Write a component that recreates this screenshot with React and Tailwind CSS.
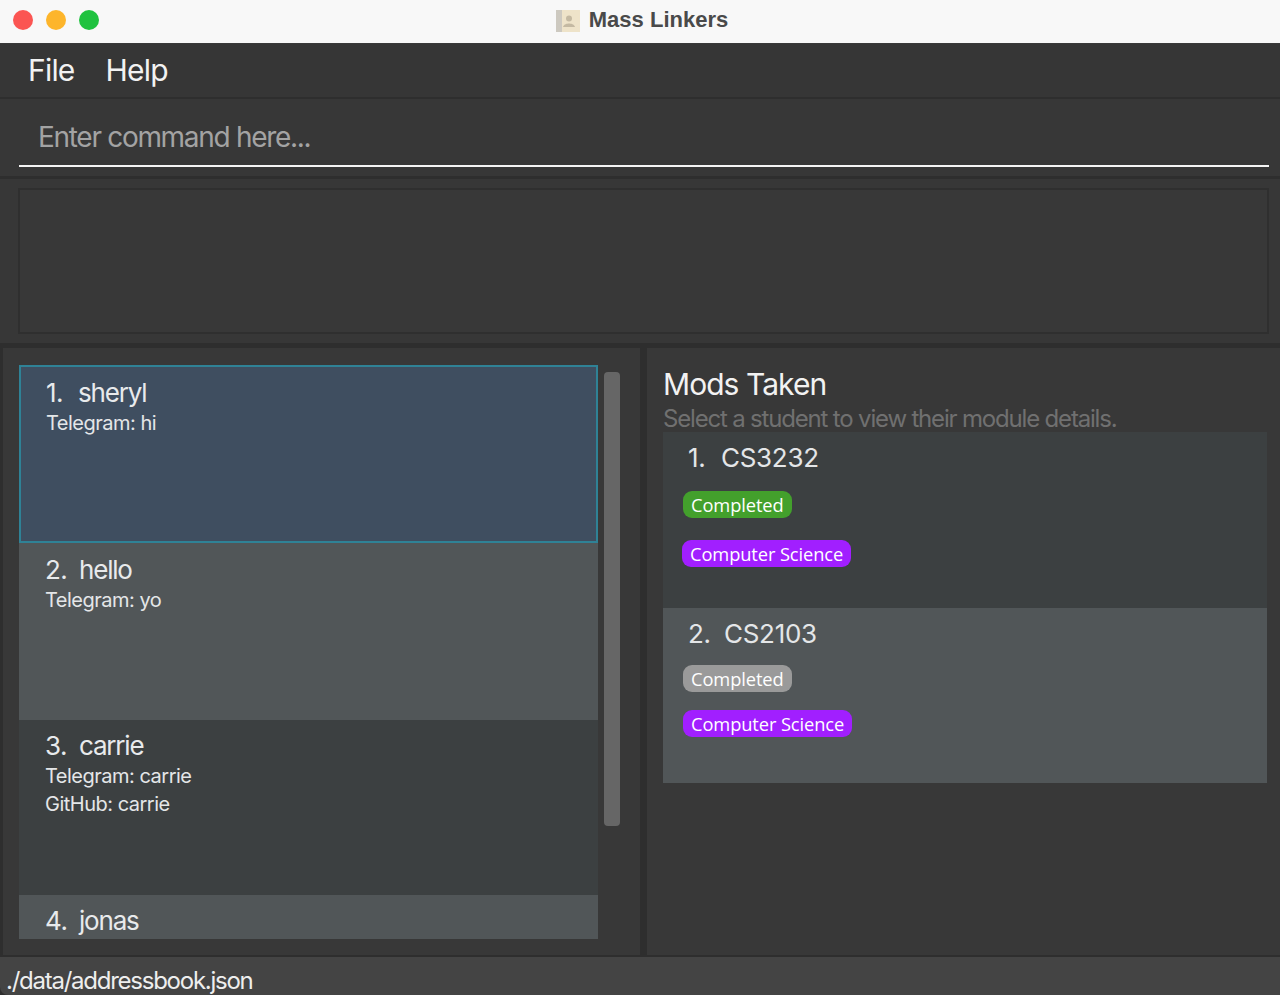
const sans = "font-['Inter','Liberation_Sans',sans-serif]";

function Badge({ color, children }) {
  return (
    <span className={`inline-flex h-[27px] items-center rounded-[9px] px-2 pt-px text-[18.3px] leading-none text-white font-['Open_Sans','Noto_Sans',sans-serif] tracking-[-0.1px] ${color}`}>
      {children}
    </span>
  );
}

function Student({ n, name, lines, bg, selected, h, top }) {
  return (
    <div className={`shrink-0 ${h} ${bg} ${top} ${selected ? "border-2 border-[#2f8296] pl-[25px]" : "pl-[26px]"}`}>
      <div className="flex text-[26px] leading-[32px] text-[#e8eaec]">
        <span className={`tracking-[-0.5px] ${selected ? "w-[32px]" : "w-[34px]"}`}>{n}.</span>
        <span className="tracking-[-1.2px]">{name}</span>
      </div>
      <div className="text-[20px] leading-[28px] tracking-[-0.5px] text-[#e4e6e8]">
        {lines.map((l) => <div key={l}>{l}</div>)}
      </div>
    </div>
  );
}

function Mod({ n, code, bg, h, statusColor, numLeft, codeWidth, badgeLeft, tagLeft, gapTop, gapMid }) {
  return (
    <div className={`shrink-0 ${h} ${bg} flex flex-col pt-[10px]`}>
      <div className={`flex text-[26px] leading-[32px] tracking-[-0.3px] text-[#e4e6e8] ${numLeft}`}>
        <span className={codeWidth}>{n}.</span>
        <span>{code}</span>
      </div>
      <div className={`${gapTop} ${badgeLeft}`}>
        <Badge color={statusColor}>Completed</Badge>
      </div>
      <div className={`${gapMid} ${tagLeft}`}>
        <Badge color="bg-[#a11fff]">Computer Science</Badge>
      </div>
    </div>
  );
}

export default function App() {
  return (
    <div className={`flex h-[995px] w-[1280px] flex-col overflow-hidden bg-[#2e2e2e] ${sans}`}>
      {/* Title bar */}
      <header className="relative flex h-[44px] shrink-0 items-center justify-center border-b border-[#3a3a3a] bg-[#f8f8f8]">
        <div className="absolute left-[13px] top-[10px] flex gap-[13px]">
          <span className="h-5 w-5 rounded-full bg-[#fb5552]" />
          <span className="h-5 w-5 rounded-full bg-[#fdb52b]" />
          <span className="h-5 w-5 rounded-full bg-[#1fc23f]" />
        </div>
        <div className="ml-[4px] flex items-center gap-[9px] pb-[2px]">
          <svg width="24" height="22" viewBox="0 0 24 22">
            <rect width="24" height="22" fill="#eee3c9" />
            <rect width="6" height="22" fill="#cdc9c0" />
            <circle cx="13" cy="8.5" r="3" fill="#c4b9a2" />
            <path d="M7 17 C8 14 11 13.5 13 13.5 C15 13.5 18 14 19 17 Z" fill="#c4b9a2" />
          </svg>
          <span className="pb-[1px] text-[22px] font-bold leading-none text-[#4a4a4a] font-['Liberation_Sans',sans-serif]">Mass Linkers</span>
        </div>
      </header>

      {/* Menu */}
      <nav className="flex h-[53px] shrink-0 items-center gap-[31px] bg-[#363636] pb-[1px] pl-[28px] text-[30px] leading-none tracking-[-0.8px] text-[#f2f2f2]">
        <span>File</span>
        <span>Help</span>
      </nav>

      {/* Command box */}
      <section className="mt-[2px] h-[77px] shrink-0 bg-[#373737] pl-[19px] pr-[11px]">
        <div className="flex h-[68px] items-center border-b-2 border-[#f4f4f4] pl-[19px] pt-[10px] text-[28px] leading-none tracking-[-1.3px] text-[#a3a3a3]">
          Enter command here...
        </div>
      </section>

      {/* Result box */}
      <section className="mt-[3px] h-[164px] shrink-0 bg-[#373737] pb-[9px] pl-[18px] pr-[11px] pt-[9px]">
        <div className="h-full border-2 border-[#2f2f2f] bg-[#383838]" />
      </section>

      {/* Main */}
      <main className="mt-[5px] flex h-[607px] shrink-0 pl-[3px]">
        <div className="flex h-full w-[637px] gap-[6px] bg-[#383838] pl-[16px] pt-[17px]">
          <div className="flex h-[574px] w-[579px] flex-col overflow-hidden">
            <Student n="1" name="sheryl" lines={["Telegram: hi"]} bg="bg-[#3f4e60]" h="h-[178px]" top="pt-[10px]" selected />
            <Student n="2" name="hello" lines={["Telegram: yo"]} bg="bg-[#515658]" h="h-[177px]" top="pt-[11px]" />
            <Student n="3" name="carrie" lines={["Telegram: carrie", "GitHub: carrie"]} bg="bg-[#3c4041]" h="h-[175px]" top="pt-[10px]" />
            <Student n="4" name="jonas" lines={[]} bg="bg-[#515658]" h="h-[175px]" top="pt-[10px]" />
          </div>
          <div className="mt-[7px] h-[454px] w-4 rounded-[4px] bg-[#666666]" />
        </div>
        <div className="ml-[7px] h-full w-[633px] bg-[#383838] pl-[16px] pr-[13px] pt-[18px]">
          <h2 className="text-[30px] font-normal leading-[36px] tracking-[-0.95px] text-[#f2f2f2]">Mods Taken</h2>
          <p className="h-[30px] text-[24px] leading-[34px] tracking-[-1.18px] text-[#707070]">Select a student to view their module details.</p>
          <Mod n="1" code="CS3232" bg="bg-[#3c4041]" h="h-[176px]" statusColor="bg-[#43a02c]" numLeft="pl-[25px]" codeWidth="w-[33px]" badgeLeft="pl-[20px]" tagLeft="pl-[19px]" gapTop="mt-[17px]" gapMid="mt-[22px]" />
          <Mod n="2" code="CS2103" bg="bg-[#515658]" h="h-[175px]" statusColor="bg-[#9a9a9a]" numLeft="pl-[25px]" codeWidth="w-[36px]" badgeLeft="pl-[20px]" tagLeft="pl-[20px]" gapTop="mt-[15px]" gapMid="mt-[18px]" />
        </div>
      </main>

      {/* Status */}
      <footer className="mt-[2px] flex h-[38px] shrink-0 items-center rounded-bl-[8px] bg-[#444444] pl-[6px] pt-[10px] text-[24px] leading-none tracking-[-1.25px] text-[#eeeeee]">
        ./data/addressbook.json
      </footer>
    </div>
  );
}
